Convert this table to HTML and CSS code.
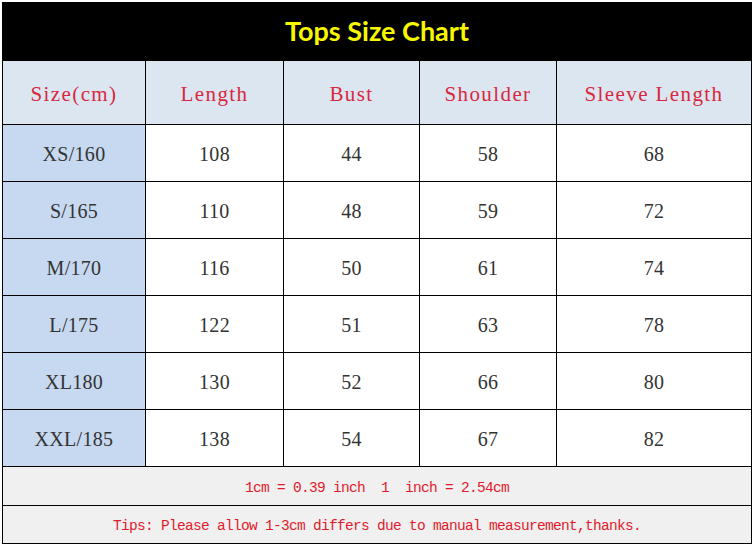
FILE: index.html
```html
<!DOCTYPE html>
<html>
<head>
<meta charset="utf-8">
<link rel="stylesheet" href="styles.css">
</head>
<body>
<div class="chart">
  <div class="title">Tops Size Chart</div>
  <div class="hd">Size(cm)</div>
  <div class="hd">Length</div>
  <div class="hd">Bust</div>
  <div class="hd">Shoulder</div>
  <div class="hd">Sleeve Length</div>

  <div class="sz">XS/160</div><div class="cell">108</div><div class="cell">44</div><div class="cell">58</div><div class="cell">68</div>
  <div class="sz">S/165</div><div class="cell">110</div><div class="cell">48</div><div class="cell">59</div><div class="cell">72</div>
  <div class="sz">M/170</div><div class="cell">116</div><div class="cell">50</div><div class="cell">61</div><div class="cell">74</div>
  <div class="sz">L/175</div><div class="cell">122</div><div class="cell">51</div><div class="cell">63</div><div class="cell">78</div>
  <div class="sz">XL180</div><div class="cell">130</div><div class="cell">52</div><div class="cell">66</div><div class="cell">80</div>
  <div class="sz">XXL/185</div><div class="cell">138</div><div class="cell">54</div><div class="cell">67</div><div class="cell">82</div>

  <div class="note">1cm = 0.39 inch&nbsp;&nbsp;1&nbsp;&nbsp;inch = 2.54cm</div>
  <div class="note">Tips: Please allow 1-3cm differs due to manual measurement,thanks.</div>
</div>
</body>
</html>
```

FILE: styles.css
```css
html, body {
  margin: 0;
  padding: 0;
  background: #ffffff;
}
body {
  padding: 2px;
}
.chart {
  box-sizing: border-box;
  width: 750px;
  border: 1px solid #000;
  background: #000;
  display: grid;
  grid-template-columns: 142px 137px 135px 136px 1fr;
  grid-template-rows: 57px 63px repeat(6, 56px) 38px 37px;
  gap: 1px;
}
.chart > div {
  display: flex;
  align-items: center;
  justify-content: center;
}
.title {
  grid-column: 1 / -1;
  background: #000;
  color: #f7f700;
  font-family: Lato, "Open Sans", sans-serif;
  font-weight: 700;
  font-size: 27px;
  padding-bottom: 2px;
}
.hd {
  background: #dce6f1;
  color: #d8283f;
  font-family: "Liberation Serif", serif;
  font-size: 21px;
  letter-spacing: 1.4px;
  padding-top: 4px;
}
.sz {
  background: #c6d9f0;
  color: #333;
  font-family: "Liberation Serif", serif;
  font-size: 20px;
  letter-spacing: 0.3px;
  padding-top: 3px;
}
.cell {
  background: #fff;
  color: #333;
  font-family: "Liberation Serif", serif;
  font-size: 20px;
  letter-spacing: 0.3px;
  padding-top: 3px;
}
.note {
  grid-column: 1 / -1;
  background: #f0f0f0;
  color: #e01a2c;
  font-family: "Liberation Mono", monospace;
  font-size: 14.5px;
  letter-spacing: -0.7px;
  white-space: pre;
  padding-top: 3px;
}
```
